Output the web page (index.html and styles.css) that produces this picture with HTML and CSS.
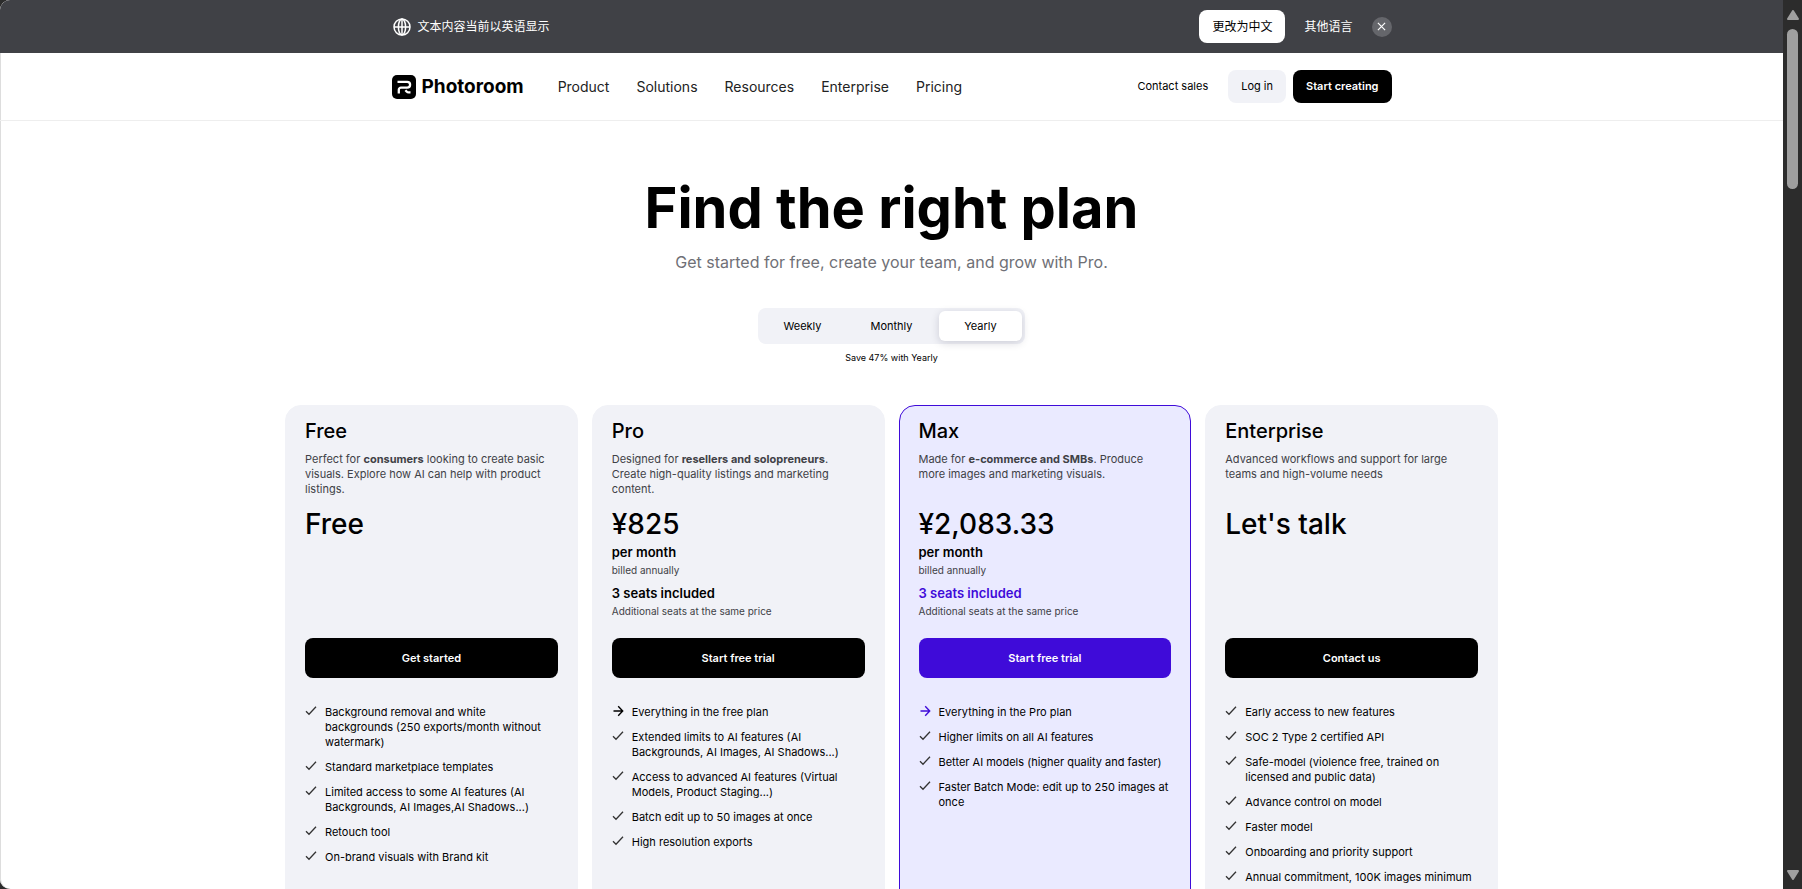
FILE: index.html
```html
<!DOCTYPE html>
<html lang="en">
<head>
    <meta charset="UTF-8">
    <meta name="viewport" content="width=device-width, initial-scale=1.0">
    <title>Photoroom Pricing</title>
    <link rel="stylesheet" href="styles.css">
</head>
<body>
    <svg class="symbols" aria-hidden="true">
        <symbol id="check" viewBox="0 0 12 12"><path d="M1 6.2 4 9.2 11 1.8" fill="none" stroke="currentColor" stroke-width="1.3"/></symbol>
        <symbol id="arrow" viewBox="0 0 12 12"><path d="M1.5 6h9M6.2 1.3 10.7 6 6.2 10.7" fill="none" stroke="currentColor" stroke-width="1.4"/></symbol>
    </svg>

    <div class="page">
        <div class="banner">
            <div class="container">
                <svg class="globe" viewBox="0 0 18 18" fill="none" stroke="currentColor" stroke-width="1.5">
                    <circle cx="9" cy="9" r="8"/>
                    <ellipse cx="9" cy="9" rx="3.6" ry="8"/>
                    <path d="M1 9h16M9 1v16"/>
                </svg>
                <span class="banner-text" lang="zh">文本内容当前以英语显示</span>
                <button class="btn btn-white" lang="zh">更改为中文</button>
                <button class="btn-plain" lang="zh">其他语言</button>
                <button class="close" aria-label="Close">
                    <svg viewBox="0 0 10 10"><path d="M1 1l8 8M9 1 1 9" stroke="currentColor" stroke-width="1.3"/></svg>
                </button>
            </div>
        </div>

        <header class="header">
            <div class="container">
                <a class="logo" href="#">
                    <svg viewBox="0 0 24 24">
                        <rect width="24" height="24" rx="5" fill="#000"/>
                        <path d="M5.5 6.8h9.7a2.9 2.9 0 0 1 0 5.8H9a2.2 2.2 0 0 0-2.2 2.2V18.5M13.4 15.2l1.2 1.3a2.8 2.8 0 0 0 2.1.9h1.8" fill="none" stroke="#fff" stroke-width="2.3"/>
                    </svg>
                    <span>Photoroom</span>
                </a>
                <nav class="nav">
                    <a href="#">Product</a>
                    <a href="#">Solutions</a>
                    <a href="#">Resources</a>
                    <a href="#">Enterprise</a>
                    <a href="#">Pricing</a>
                </nav>
                <a class="contact" href="#">Contact sales</a>
                <button class="btn btn-grey">Log in</button>
                <button class="btn btn-black">Start creating</button>
            </div>
        </header>

        <main>
            <section class="hero">
                <h1>Find the right plan</h1>
                <p class="subtitle">Get started for free, create your team, and grow with Pro.</p>
                <div class="period" role="radiogroup" aria-label="Billing period">
                    <label><input type="radio" name="period"><span>Weekly</span></label>
                    <label><input type="radio" name="period"><span>Monthly</span></label>
                    <label><input type="radio" name="period" checked><span>Yearly</span></label>
                </div>
                <p class="saving">Save 47% with Yearly</p>
            </section>

            <section class="plans">
                <article class="plan">
                    <h2>Free</h2>
                    <p class="desc">Perfect for <strong>consumers</strong> looking to create basic visuals. Explore how AI can help with product listings.</p>
                    <div class="pricing">
                        <p class="price">Free</p>
                    </div>
                    <button class="cta">Get started</button>
                    <ul class="features">
                        <li><svg><use href="#check"/></svg><span>Background removal and white<br>backgrounds (250 exports/month without<br>watermark)</span></li>
                        <li><svg><use href="#check"/></svg>Standard marketplace templates</li>
                        <li><svg><use href="#check"/></svg>Limited access to some AI features (AI Backgrounds, AI Images,AI Shadows...)</li>
                        <li><svg><use href="#check"/></svg>Retouch tool</li>
                        <li><svg><use href="#check"/></svg>On-brand visuals with Brand kit</li>
                    </ul>
                </article>

                <article class="plan">
                    <h2>Pro</h2>
                    <p class="desc">Designed for <strong>resellers and solopreneurs</strong>. Create high-quality listings and marketing content.</p>
                    <div class="pricing">
                        <p class="price">¥825</p>
                        <p class="strong-line">per month</p>
                        <p class="note">billed annually</p>
                        <p class="strong-line seats">3 seats included</p>
                        <p class="note">Additional seats at the same price</p>
                    </div>
                    <button class="cta">Start free trial</button>
                    <ul class="features">
                        <li><svg class="arrow"><use href="#arrow"/></svg>Everything in the free plan</li>
                        <li><svg><use href="#check"/></svg>Extended limits to AI features (AI Backgrounds, AI Images, AI Shadows...)</li>
                        <li><svg><use href="#check"/></svg>Access to advanced AI features (Virtual Models, Product Staging...)</li>
                        <li><svg><use href="#check"/></svg>Batch edit up to 50 images at once</li>
                        <li><svg><use href="#check"/></svg>High resolution exports</li>
                    </ul>
                </article>

                <article class="plan plan-max">
                    <h2>Max</h2>
                    <p class="desc">Made for <strong>e-commerce and SMBs</strong>. Produce more images and marketing visuals.</p>
                    <div class="pricing">
                        <p class="price">¥2,083.33</p>
                        <p class="strong-line">per month</p>
                        <p class="note">billed annually</p>
                        <p class="strong-line seats">3 seats included</p>
                        <p class="note">Additional seats at the same price</p>
                    </div>
                    <button class="cta">Start free trial</button>
                    <ul class="features">
                        <li><svg class="arrow"><use href="#arrow"/></svg>Everything in the Pro plan</li>
                        <li><svg><use href="#check"/></svg>Higher limits on all AI features</li>
                        <li><svg><use href="#check"/></svg>Better AI models (higher quality and faster)</li>
                        <li><svg><use href="#check"/></svg>Faster Batch Mode: edit up to 250 images at once</li>
                    </ul>
                </article>

                <article class="plan">
                    <h2>Enterprise</h2>
                    <p class="desc">Advanced workflows and support for large teams and high-volume needs</p>
                    <div class="pricing">
                        <p class="price">Let's talk</p>
                    </div>
                    <button class="cta">Contact us</button>
                    <ul class="features">
                        <li><svg><use href="#check"/></svg>Early access to new features</li>
                        <li><svg><use href="#check"/></svg>SOC 2 Type 2 certified API</li>
                        <li><svg><use href="#check"/></svg>Safe-model (violence free, trained on licensed and public data)</li>
                        <li><svg><use href="#check"/></svg>Advance control on model</li>
                        <li><svg><use href="#check"/></svg>Faster model</li>
                        <li><svg><use href="#check"/></svg>Onboarding and priority support</li>
                        <li><svg><use href="#check"/></svg>Annual commitment, 100K images minimum</li>
                    </ul>
                </article>
            </section>
        </main>
    </div>

    <div class="scrollbar" aria-hidden="true">
        <svg viewBox="0 0 12 10"><path d="M6 1 11 9H1z" fill="#9f9f9f" stroke="#9f9f9f" stroke-width="2" stroke-linejoin="round"/></svg>
        <div class="thumb"></div>
        <svg viewBox="0 0 12 10"><path d="M6 9 11 1H1z" fill="#9f9f9f" stroke="#9f9f9f" stroke-width="2" stroke-linejoin="round"/></svg>
    </div>
</body>
</html>
```

FILE: styles.css
```css
* {
    box-sizing: border-box;
}

body {
    font-family: Inter, "Noto Sans CJK SC", sans-serif;
    font-size: 11px;
    line-height: 15px;
    color: #000;
    margin: 0;
    height: 100vh;
    display: flex;
    overflow: hidden;
    background: #2c2c2c;
}

h1, h2, p, ul {
    margin: 0;
    padding: 0;
}

a {
    color: inherit;
    text-decoration: none;
}

button {
    font: inherit;
    color: inherit;
    border: none;
    cursor: pointer;
}

.symbols {
    display: none;
}

.page {
    flex: 1;
    overflow: hidden;
    background: white;
    box-shadow: inset 1px 0 #ddd;
    border-radius: 10px 0 0 10px;
}

.container {
    max-width: 1000px;
    height: 100%;
    margin: 0 auto;
    display: flex;
    align-items: center;
}

/* language banner */
.banner {
    height: 53px;
    background: #404146;
    color: white;
    font-size: 12px;
}

.globe {
    width: 18px;
    height: 18px;
    margin: 0 7px 0 1px;
}

.banner-text {
    margin-right: auto;
}

.btn {
    height: 33px;
    padding: 0 13px;
    border-radius: 8px;
}

.btn-white {
    background: white;
    color: black;
}

.btn-plain {
    background: none;
    padding: 0 19px;
}

.close {
    width: 20px;
    height: 20px;
    padding: 0;
    border-radius: 50%;
    background: #65666b;
    display: flex;
    align-items: center;
    justify-content: center;
}

.close svg {
    width: 9px;
    height: 9px;
}

/* header */
.header {
    height: 68px;
    border-bottom: 1px solid #eee;
}

.logo {
    display: flex;
    align-items: center;
    gap: 6px;
    font-size: 19px;
    line-height: 24px;
    font-weight: 700;
}

.logo svg {
    width: 24px;
    height: 24px;
}

.nav {
    display: flex;
    gap: 27px;
    margin-left: 34px;
    margin-right: auto;
    font-size: 14px;
    color: #222;
}

.contact {
    margin-right: 20px;
}

.btn-grey {
    background: #f1f2f7;
    margin-right: 7px;
}

.btn-black {
    background: black;
    color: white;
    font-weight: 600;
}

/* hero */
.hero {
    padding-top: 51px;
    text-align: center;
}

h1 {
    font-size: 56px;
    line-height: 72px;
    font-weight: 700;
}

.subtitle {
    margin-top: 6px;
    font-size: 16px;
    line-height: 24px;
    color: #6f7076;
}

.period {
    display: inline-flex;
    margin-top: 34px;
    border-radius: 8px;
    background: #f1f2f7;
}

.period input {
    position: absolute;
    opacity: 0;
}

.period span {
    display: block;
    width: 83px;
    margin: 3px;
    line-height: 30px;
    border-radius: 6px;
    cursor: pointer;
}

.period input:checked + span {
    background: white;
    box-shadow: 0 2px 8px rgba(20, 20, 50, 0.16);
}

.saving {
    margin-top: 6px;
    font-size: 9px;
    line-height: 16px;
}

/* plans */
.plans {
    max-width: 1213px;
    margin: 39px auto 0;
    display: grid;
    grid-template-columns: repeat(4, 1fr);
    gap: 14px;
}

.plan {
    padding: 13px 19px 60px;
    border: 1px solid #f1f2f7;
    border-radius: 16px;
    background: #f1f2f7;
}

.plan-max {
    border-color: #3f0bd9;
    background: #eaeaff;
}

h2 {
    font-size: 20px;
    line-height: 24px;
    font-weight: 500;
}

.desc {
    min-height: 45px;
    margin-top: 9px;
    color: #404146;
}

.pricing {
    min-height: 131px;
    margin-top: 10px;
}

.price {
    font-size: 28px;
    line-height: 34px;
    font-weight: 500;
}

.strong-line {
    margin-top: 3px;
    font-size: 13px;
    line-height: 16px;
    font-weight: 600;
}

.seats {
    margin-top: 8px;
}

.plan-max .seats {
    color: #3f0bd9;
}

.note {
    margin-top: 3px;
    font-size: 10px;
    line-height: 14px;
    color: #404146;
}

.cta {
    width: 100%;
    height: 40px;
    border-radius: 8px;
    background: black;
    color: white;
    font-weight: 600;
}

.plan-max .cta {
    background: #3f0bd9;
}

.features {
    display: flex;
    flex-direction: column;
    gap: 10px;
    margin-top: 27px;
    list-style: none;
}

.features li {
    display: flex;
    gap: 8px;
}

.features svg {
    flex: none;
    width: 12px;
    height: 12px;
    color: #333;
}

.features .arrow {
    color: black;
}

.plan-max .arrow {
    color: #3f0bd9;
}

/* window scrollbar */
.scrollbar {
    width: 19px;
    padding: 10px 0 9px;
    display: flex;
    flex-direction: column;
    align-items: center;
    background: #2c2c2c;
}

.scrollbar svg {
    width: 12px;
    height: 10px;
}

.thumb {
    width: 11px;
    height: 18vh;
    margin: 9px 0 auto;
    border-radius: 6px;
    background: #9f9f9f;
}
```
